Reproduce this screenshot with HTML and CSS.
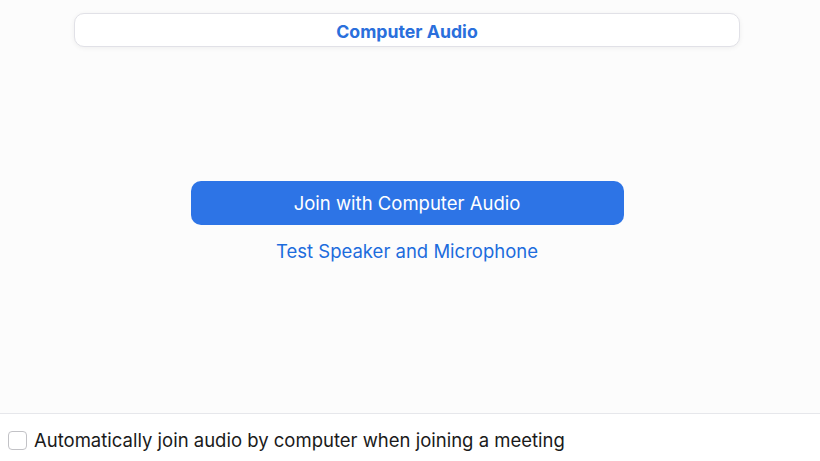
FILE: index.html
```html
<!DOCTYPE html>
<html>
<head>
<meta charset="utf-8">
<link rel="stylesheet" href="styles.css">
</head>
<body>
<div class="app">
  <div class="main">
    <div class="tabbar"><span class="tab-title">Computer Audio</span></div>
    <div class="center">
      <button class="join">Join with Computer Audio</button>
      <a class="test">Test Speaker and Microphone</a>
    </div>
  </div>
  <div class="footer">
    <span class="checkbox"></span>
    <span class="label">Automatically join audio by computer when joining a meeting</span>
  </div>
</div>
</body>
</html>
```
FILE: styles.css
```css
html, body {
  margin: 0;
  padding: 0;
  background: #ffffff;
}
body {
  font-family: "Inter", "Roboto", "Liberation Sans", sans-serif;
  width: 820px;
  height: 461px;
  overflow: hidden;
}
.app {
  display: flex;
  flex-direction: column;
  height: 461px;
}
.main {
  height: 414px;
  flex: none;
  background: #fcfcfc;
  border-bottom: 1px solid #e6e7eb;
  display: flex;
  flex-direction: column;
  box-sizing: border-box;
}
.tabbar {
  margin: 13px 0 0 74px;
  width: 666px;
  height: 34px;
  box-sizing: border-box;
  background: #ffffff;
  border: 1px solid #e1e1e7;
  border-radius: 10px;
  box-shadow: 0 1px 5px rgba(0,0,0,0.06);
  display: flex;
  align-items: center;
  justify-content: center;
  padding-top: 2px;
}
.tab-title {
  color: #2a6fdc;
  font-weight: 700;
  font-size: 17.7px;
}
.center {
  display: flex;
  flex-direction: column;
  align-items: center;
  margin-left: -6px;
  margin-top: 134px;
}
.join {
  width: 433px;
  height: 44px;
  border: none;
  border-radius: 10px;
  background: #2d74e6;
  color: #ffffff;
  font-family: inherit;
  font-size: 18.5px;
  font-weight: 400;
  padding: 0;
}
.test {
  margin-top: 15px;
  color: #1c6cdd;
  font-size: 18.5px;
}
.footer {
  display: flex;
  align-items: center;
  flex: 1;
  box-sizing: border-box;
  padding-left: 8px;
  padding-top: 5px;
  gap: 7px;
  background: #ffffff;
}
.checkbox {
  width: 19px;
  height: 19px;
  box-sizing: border-box;
  border: 1px solid #c2c2c6;
  border-radius: 4px;
  background: #ffffff;
}
.label {
  font-size: 18.5px;
  color: #1a1a1a;
}
```
